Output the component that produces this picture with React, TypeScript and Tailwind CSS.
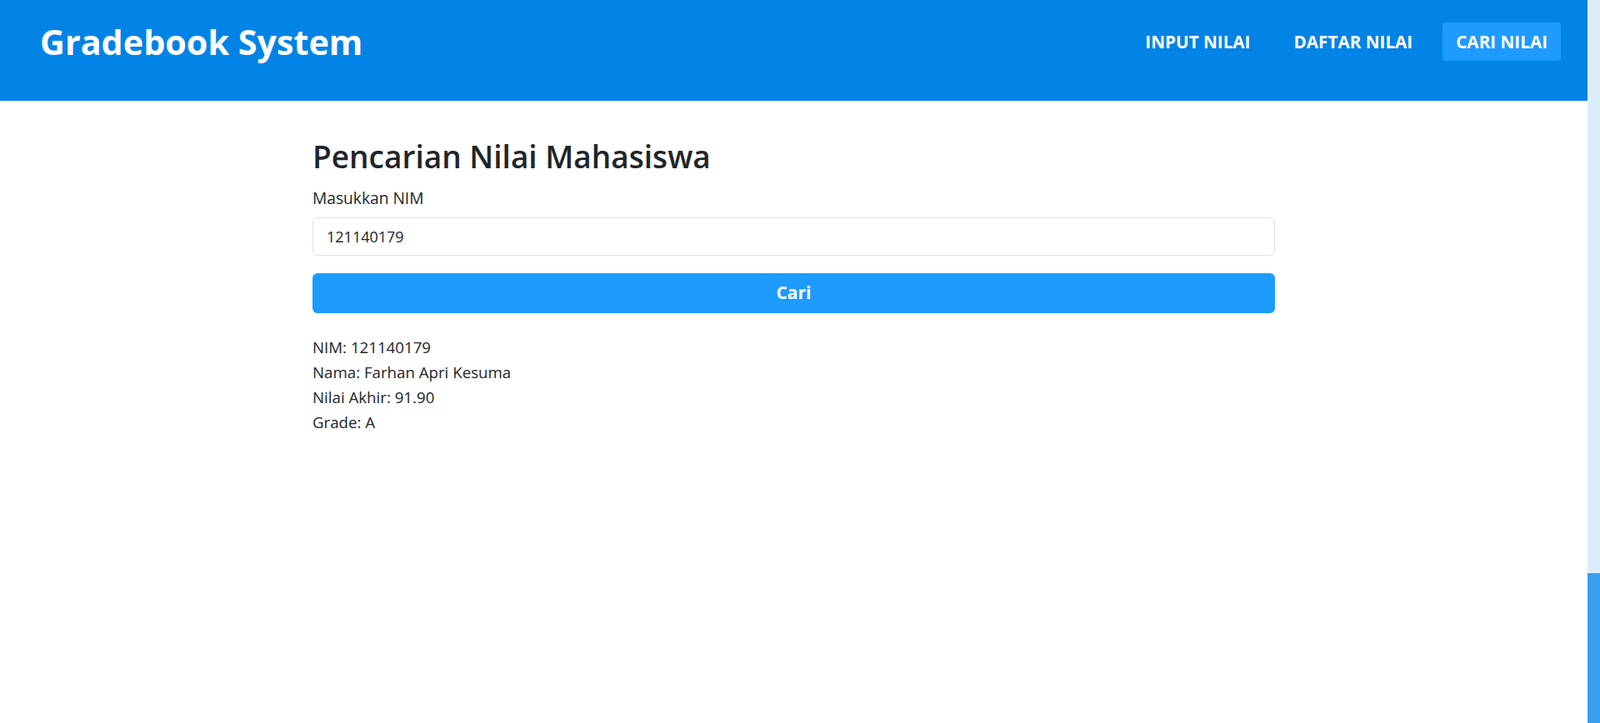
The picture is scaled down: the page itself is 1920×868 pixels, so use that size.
import React, { useState } from 'react';

type Result = {
  nim: string;
  nama: string;
  nilaiAkhir: number;
  grade: string;
};

const navItems = ['INPUT NILAI', 'DAFTAR NILAI', 'CARI NILAI'];

// Header dengan judul dan navigasi
const Header: React.FC<{ active: string }> = ({ active }) => (
  <header className="h-[121px] bg-[#0283e6] pl-12 pr-8 pb-[21px] flex items-center justify-between">
    <h1 className="text-[41.3px] font-bold text-white leading-[56px]">Gradebook System</h1>
    <nav className="flex items-center gap-5">
      {navItems.map((item) => (
        <a
          key={item}
          href="#"
          className={`px-4 py-2 rounded text-[20.7px] leading-[30px] font-bold text-white ${
            item === active ? 'bg-[#1d9bfe]' : ''
          }`}
        >
          {item}
        </a>
      ))}
    </nav>
  </header>
);

export default function App() {
  const [nim, setNim] = useState('121140179');
  const [result] = useState<Result | null>({
    nim: '121140179',
    nama: 'Farhan Apri Kesuma',
    nilaiAkhir: 91.9,
    grade: 'A',
  });

  return (
    <div className="flex h-screen bg-white text-[#212529] font-['Open_Sans',sans-serif]">
      <div className="flex-1 overflow-hidden">
        <Header active="CARI NILAI" />

        <main className="w-[1155px] mx-auto pt-[43px]">
          <h2 className="text-[37px] font-semibold leading-[48px] mb-3">Pencarian Nilai Mahasiswa</h2>

          <label htmlFor="nim" className="block text-[19.2px] leading-[27px] mb-[10px]">
            Masukkan NIM
          </label>
          <input
            id="nim"
            type="text"
            value={nim}
            onChange={(e) => setNim(e.target.value)}
            className="block w-full h-[46px] px-4 text-[18px] border border-[#dee2e6] rounded-md outline-none"
          />
          <button className="block w-full h-12 mt-[21px] rounded-md bg-[#1d9bfe] text-white text-[21px] font-bold">
            Cari
          </button>

          {/* Hasil pencarian */}
          {result && (
            <div className="mt-[26px] text-[18.7px] leading-[30px]">
              <p>NIM: {result.nim}</p>
              <p>Nama: {result.nama}</p>
              <p>Nilai Akhir: {result.nilaiAkhir.toFixed(2)}</p>
              <p>Grade: {result.grade}</p>
            </div>
          )}
        </main>
      </div>

      {/* scrollbar */}
      <div className="w-[15px] bg-[#dbedfd] flex flex-col justify-end">
        <div className="h-[180px] bg-[#39a0f0]" />
      </div>
    </div>
  );
}
